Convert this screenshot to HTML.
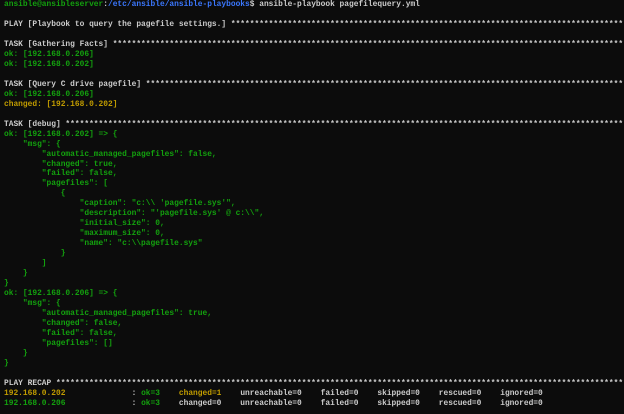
<!DOCTYPE html>
<html><head><meta charset="utf-8"><style>
html,body{margin:0;padding:0;background:#0c0c0c;width:624px;height:414px;overflow:hidden}
pre{margin:0;padding:0 0 0 4px;position:absolute;top:0px;left:0;width:620px;height:414px;overflow:hidden;font-family:"Liberation Mono",monospace;font-size:7.88px;line-height:9.97px;color:#cccccc;white-space:pre;font-weight:bold}
.g{color:#13a10e}.b{color:#3b78ff}.y{color:#c19c00}
</style></head><body>
<pre><span class="g">ansible@ansibleserver</span>:<span class="b">/etc/ansible/ansible-playbooks</span>$ ansible-playbook pagefilequery.yml

PLAY [Playbook to query the pagefile settings.] ************************************************************************************************

TASK [Gathering Facts] *************************************************************************************************************************
<span class="g">ok: [192.168.0.206]</span>
<span class="g">ok: [192.168.0.202]</span>

TASK [Query C drive pagefile] ******************************************************************************************************************
<span class="g">ok: [192.168.0.206]</span>
<span class="y">changed: [192.168.0.202]</span>

TASK [debug] ***********************************************************************************************************************************
<span class="g">ok: [192.168.0.202] =&gt; {
    "msg": {
        "automatic_managed_pagefiles": false,
        "changed": true,
        "failed": false,
        "pagefiles": [
            {
                "caption": "c:\\ 'pagefile.sys'",
                "description": "'pagefile.sys' @ c:\\",
                "initial_size": 0,
                "maximum_size": 0,
                "name": "c:\\pagefile.sys"
            }
        ]
    }
}
ok: [192.168.0.206] =&gt; {
    "msg": {
        "automatic_managed_pagefiles": true,
        "changed": false,
        "failed": false,
        "pagefiles": []
    }
}</span>

PLAY RECAP *************************************************************************************************************************************
<span class="y">192.168.0.202</span>              : <span class="g">ok=3</span>    <span class="y">changed=1</span>    unreachable=0    failed=0    skipped=0    rescued=0    ignored=0
<span class="g">192.168.0.206</span>              : <span class="g">ok=3</span>    changed=0    unreachable=0    failed=0    skipped=0    rescued=0    ignored=0
</pre>
</body></html>
